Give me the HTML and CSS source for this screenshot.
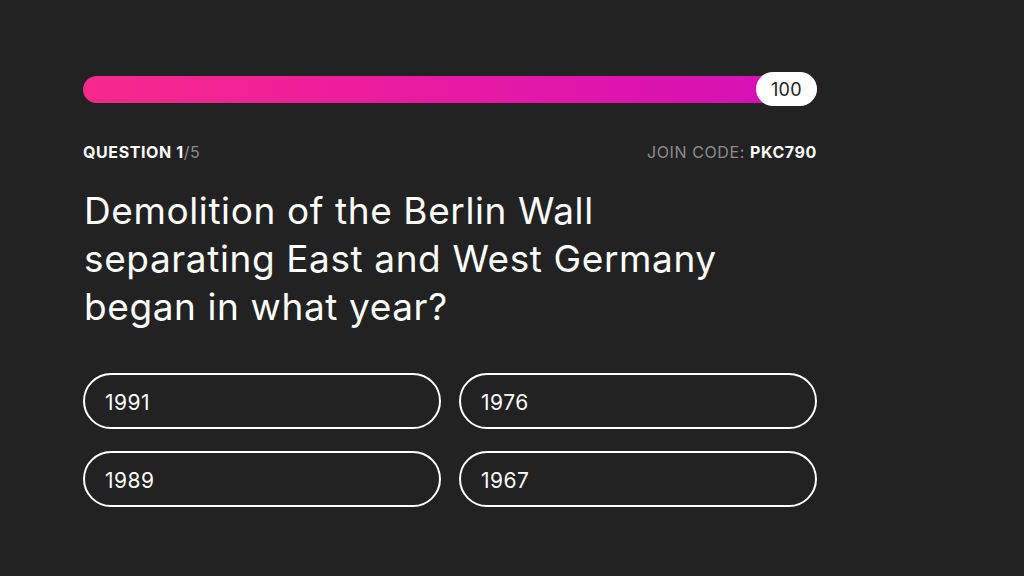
FILE: index.html
```html
<!DOCTYPE html>
<html lang="en">
<head>
<meta charset="utf-8">
<link rel="stylesheet" href="styles.css">
</head>
<body>
<main class="quiz">
  <div class="progress">
    <div class="progress-bar"></div>
    <span class="score">100</span>
  </div>
  <div class="meta">
    <span class="question-count"><b>QUESTION 1</b>/5</span>
    <span class="join-code">JOIN CODE: <b>PKC790</b></span>
  </div>
  <h1 class="question">Demolition of the Berlin Wall<br>separating East and West Germany<br>began in what year?</h1>
  <div class="options">
    <button class="option">1991</button>
    <button class="option">1976</button>
    <button class="option">1989</button>
    <button class="option">1967</button>
  </div>
</main>
</body>
</html>
```
FILE: styles.css
```css
* { box-sizing: border-box; }
html, body {
  margin: 0;
  background: #222222;
  font-family: Inter, "Noto Sans", sans-serif;
  color: #ffffff;
}
body { width: 1024px; height: 576px; overflow: hidden; }
.quiz {
  width: 734px;
  margin-left: 83px;
  padding-top: 72px;
}
.progress {
  position: relative;
  height: 34px;
  display: flex;
  align-items: center;
}
.progress-bar {
  width: 100%;
  height: 27px;
  border-radius: 14px;
  background: linear-gradient(90deg, #f8298b 0%, #e71aa3 50%, #d310b8 100%);
}
.score {
  position: absolute;
  right: 0;
  top: 0;
  height: 34px;
  width: 61px;
  border-radius: 17px;
  background: #ffffff;
  color: #222222;
  font-size: 18px;
  letter-spacing: 0.4px;
  display: flex;
  align-items: center;
  justify-content: center;
}
.meta {
  margin-top: 37px;
  display: flex;
  justify-content: space-between;
  font-size: 16px;
  line-height: 19px;
  letter-spacing: 0.6px;
  color: #8c8c8c;
}
.meta b { color: #ffffff; font-weight: 700; }
.question {
  margin: 25px 0 0 1px;
  font-size: 37px;
  line-height: 48px;
  font-weight: 400;
  letter-spacing: 0.6px;
}
.options {
  margin-top: 42px;
  display: grid;
  grid-template-columns: 1fr 1fr;
  column-gap: 18px;
  row-gap: 22px;
}
.option {
  height: 56px;
  border: 2px solid #ffffff;
  border-radius: 28px;
  background: transparent;
  color: #ffffff;
  font-family: inherit;
  font-size: 21px;
  letter-spacing: 0.5px;
  text-align: left;
  padding: 2px 0 0 20px;
}
```
